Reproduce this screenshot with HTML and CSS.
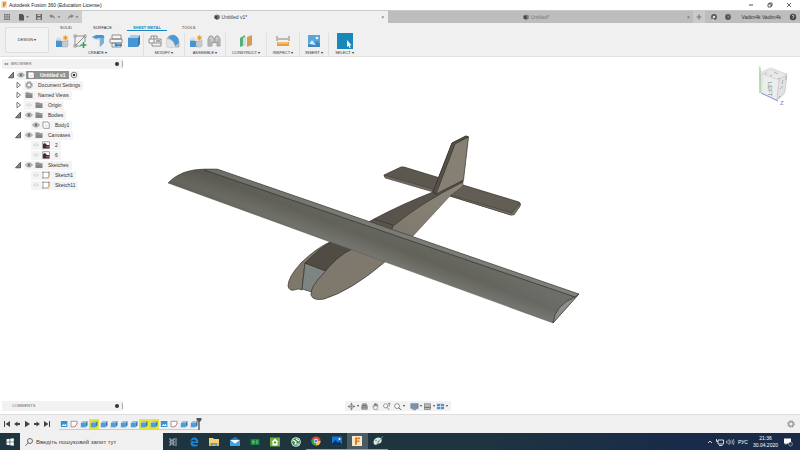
FILE: index.html
```html
<!DOCTYPE html>
<html lang="en">
<head>
<meta charset="utf-8">
<title>Autodesk Fusion 360</title>
<link rel="stylesheet" href="styles.css">
</head>
<body>
<svg class="defs" aria-hidden="true">
  <defs>
    <linearGradient id="wing" gradientUnits="userSpaceOnUse" x1="376" y1="226" x2="362" y2="262">
      <stop offset="0" stop-color="#66675f"/><stop offset=".35" stop-color="#62615a"/><stop offset=".75" stop-color="#75766f"/><stop offset="1" stop-color="#6a6b64"/>
    </linearGradient>
    <linearGradient id="shade" gradientUnits="userSpaceOnUse" x1="168" y1="180" x2="579" y2="310">
      <stop offset="0" stop-color="#3c3830" stop-opacity=".3"/><stop offset=".6" stop-color="#777" stop-opacity="0"/><stop offset="1" stop-color="#92979a" stop-opacity=".2"/>
    </linearGradient>
    <linearGradient id="side" x1="0" y1="1" x2="1" y2="0">
      <stop offset="0" stop-color="#7d786b"/><stop offset="1" stop-color="#8b867a"/>
    </linearGradient>
  </defs>
  <symbol id="eye" viewBox="0 0 10 10"><path d="M1.5 5Q5 1 8.5 5Q5 9 1.5 5Z" fill="#ddd" stroke="#888" stroke-width=".8"/><circle cx="5" cy="5" r="1.5" fill="#777"/></symbol>
  <symbol id="hidden" viewBox="0 0 10 10"><path d="M2 5Q5 2 8 5Q5 8 2 5Z" fill="#e8e8e8" stroke="#dcdcdc" stroke-width=".8"/></symbol>
  <symbol id="folder" viewBox="0 0 10 10"><path d="M1.5 2.5H5L5.7 3.2H8.5V8H1.5Z" fill="#858585"/><path d="M1.5 4.3H8.5" stroke="#b5b5b5" stroke-width=".5"/></symbol>
  <symbol id="open" viewBox="0 0 10 10"><path d="M7.5 2.2V7.8H2.5Z" fill="#888" stroke="#444" stroke-width=".8"/></symbol>
  <symbol id="closed" viewBox="0 0 10 10"><path d="M4 2.3L7.5 5L4 7.8Z" fill="#fff" stroke="#666" stroke-width=".9"/></symbol>
  <symbol id="gear" viewBox="0 0 10 10"><circle cx="5" cy="5" r="3.1" fill="none" stroke="#888" stroke-width="1.1" stroke-dasharray="1.6 .83"/><circle cx="5" cy="5" r="2.2" fill="none" stroke="#888" stroke-width="1"/></symbol>
  <symbol id="body" viewBox="0 0 10 10"><path d="M2 2H7L8.2 3V8.3H3L2 7.4Z" fill="#fff" stroke="#777" stroke-width=".7"/><path d="M4 5Q5.5 6.8 6.5 5" fill="none" stroke="#aaa" stroke-width=".6"/></symbol>
  <symbol id="photo" viewBox="0 0 10 10"><rect x="1.8" y="1.8" width="6.6" height="6.6" fill="#fff" stroke="#777" stroke-width=".7"/><path d="M2 4L4 3L6 5H8.2V8.2H2Z" fill="#39303c"/><path d="M5 6H8V7.5H5Z" fill="#a4506a"/></symbol>
  <symbol id="sketch" viewBox="0 0 10 10"><path d="M2 2.3H8V6L6 8H2Z" fill="#fff" stroke="#888" stroke-width=".7"/><path d="M8 3V7.7M5.6 8H8" stroke="#e2a24f" stroke-width=".8"/><g fill="#666"><rect x="1.4" y="1.7" width="1" height="1"/><rect x="1.4" y="7.4" width="1" height="1"/><rect x="7.4" y="1.7" width="1" height="1"/></g></symbol>
  <symbol id="tsketch" viewBox="0 0 10 10"><path d="M2 2.3H8V5L5.5 7.8H2Z" fill="#fff" stroke="#777" stroke-width=".7"/><path d="M8.3 4.5L5.5 8" stroke="#dc7868" stroke-width=".9"/></symbol>
  <symbol id="timg" viewBox="0 0 10 10"><rect x="1.8" y="2" width="6.6" height="6" fill="#3b91c7"/><path d="M2.5 7L4.5 5L5.5 6L6.7 4.8L7.8 7Z" fill="#e4f3fc"/></symbol>
  <symbol id="cube" viewBox="0 0 10 10"><path d="M1.8 4L3.8 2H8.5L6.6 4Z" fill="#96bfe2"/><path d="M1.8 4H6.6V8.3H1.8Z" fill="#509bd8"/><path d="M6.6 4L8.5 2V6.4L6.6 8.3Z" fill="#3876ae"/></symbol>
  <symbol id="newcomp" viewBox="0 0 14 14"><path d="M1 5H6V13H1Z" fill="#b9bec3"/><path d="M1 5L2 3.5H6.5V6H1Z" fill="#d8dcdf"/><path d="M1 7H7V13H1Z" fill="#4796d3"/><path d="M7 7H12L13 6V12L12 13H7Z" fill="#c8ccd0" stroke="#8d949b" stroke-width=".4"/><path d="M10.5 .5L11.2 2.4L13.4 2L12 3.8L13.4 5.5L11.2 5.2L10.5 7L9.6 5.2L7.6 5.5L8.9 3.8L7.6 2L9.6 2.4Z" fill="#efa02c"/></symbol>
  <symbol id="globe-nav" viewBox="0 0 10 10"><circle cx="5" cy="5" r="2.2" fill="none" stroke="#777" stroke-width=".8"/><path d="M5 1V9M1 5H9" stroke="#777" stroke-width=".7"/><path d="M5 .8L6 2H4ZM5 9.2L4 8H6ZM.8 5L2 4V6ZM9.2 5L8 6V4Z" fill="#666"/></symbol>
  <symbol id="tabcube" viewBox="0 0 10 10"><path d="M2 3L5 2L8.5 3V7L5.5 8.5L2 7Z" fill="#777"/><path d="M2 3L5.5 4V8.5L2 7Z" fill="#444"/></symbol>
</svg>

<header class="titlebar">
  <svg class="i8" viewBox="0 0 8 8"><rect x="1" y="0" width="6" height="7" rx="1" fill="#f7dfc0"/><path d="M3 1.2H6V2.5H4.3V3.3H5.6V4.4H4.3V6H3Z" fill="#e07b20"/></svg>
  <h1>Autodesk Fusion 360 (Education License)</h1>
  <div class="winbtns">
    <button aria-label="Minimize"><svg viewBox="0 0 10 10"><path d="M3 5H7" stroke="#222" stroke-width=".8"/></svg></button>
    <button aria-label="Restore"><svg viewBox="0 0 10 10"><path d="M3 4H6V7H3ZM4 4V3H7V6H6" fill="none" stroke="#222" stroke-width=".7"/></svg></button>
    <button aria-label="Close"><svg viewBox="0 0 10 10"><path d="M3 3L7 7M7 3L3 7" stroke="#222" stroke-width=".7"/></svg></button>
  </div>
</header>

<nav class="tabbar" aria-label="Documents">
  <div class="quick">
    <button aria-label="Data panel"><svg viewBox="0 0 10 10"><g fill="#666"><path d="M2 2h1.6v1.6H2zM4.2 2h1.6v1.6H4.2zM6.4 2H8v1.6H6.4zM2 4.2h1.6v1.6H2zM4.2 4.2h1.6v1.6H4.2zM6.4 4.2H8v1.6H6.4zM2 6.4h1.6V8H2zM4.2 6.4h1.6V8H4.2zM6.4 6.4H8V8H6.4z"/></g></svg></button>
    <button aria-label="File"><svg class="wide" viewBox="0 0 14 10"><path d="M3 2H6.5L8 3.5V8.5H3Z" fill="#555"/><path d="M10 4.3H13L11.5 6Z" fill="#666"/></svg></button>
    <button aria-label="Save"><svg viewBox="0 0 10 10"><path d="M2 2H8V8H2Z" fill="#666"/><path d="M3.5 2.5H6.5V4H3.5ZM3.3 5.5H6.7V7.6H3.3Z" fill="#ccc"/></svg></button>
    <button aria-label="Undo"><svg class="wide" viewBox="0 0 14 10"><path d="M1 4L4 2V3.3Q7 3.5 7 7.5Q6 5 4 5V6.2Z" fill="#888"/><path d="M9.5 4.3H12.5L11 6Z" fill="#777"/></svg></button>
    <button aria-label="Redo"><svg class="wide" viewBox="0 0 14 10"><path d="M8 4L5 2V3.3Q2 3.5 2 7.5Q3 5 5 5V6.2Z" fill="#888"/><path d="M9.5 4.3H12.5L11 6Z" fill="#777"/></svg></button>
  </div>
  <div class="doctab active"><a href="#"><svg class="i8"><use href="#tabcube"/></svg>Untitled v1*</a><button aria-label="Close tab">×</button></div>
  <div class="doctab"><a href="#"><svg class="i8"><use href="#tabcube"/></svg>Untitled*</a><button aria-label="Close tab">×</button></div>
  <div class="account">
    <button class="plus" aria-label="New tab"><svg viewBox="0 0 10 10"><path d="M5 2.5V7.5M2.5 5H7.5" stroke="#777" stroke-width="1.2"/></svg></button>
    <button aria-label="Extensions"><svg viewBox="0 0 10 10"><circle cx="5" cy="5" r="2.9" fill="#555"/><circle cx="5" cy="5" r="1.3" fill="#ddd"/><path d="M4 6L3 8.5H5.5Z" fill="#ddd"/></svg></button>
    <button aria-label="Job status"><svg viewBox="0 0 10 10"><circle cx="5" cy="5" r="2.9" fill="#555"/><path d="M5 3.4V5H6.4" stroke="#aaa" stroke-width=".7" fill="none"/></svg></button>
    <span>Vadim4k Vadim4k</span>
    <button aria-label="Help"><svg viewBox="0 0 10 10"><circle cx="5" cy="5" r="3.2" fill="#444"/><path d="M4 4.2Q4 3.2 5 3.2T6 4.2Q6 5 5 5.2V5.8M5 6.4V7" stroke="#eee" stroke-width=".7" fill="none"/></svg></button>
  </div>
</nav>

<section class="toolbar">
  <button class="workspace">DESIGN ▾</button>
  <div class="ribbon">
    <div class="ribtabs"><a href="#">SOLID</a><a href="#">SURFACE</a><a href="#" class="on">SHEET METAL</a><a href="#">TOOLS</a></div>
    <div class="groups">
      <div class="group create">
        <div class="icons">
          <svg><use href="#newcomp"/></svg>
          <svg viewBox="0 0 14 14"><path d="M2 2H12V8M2 2V12H8M2 12L12 2" fill="none" stroke="#777" stroke-width=".8"/><g fill="#fff" stroke="#666" stroke-width=".6"><rect x="1" y="1" width="2" height="2"/><rect x="11" y="1" width="2" height="2"/><rect x="1" y="11" width="2" height="2"/></g><path d="M10.5 8V14M7.5 11H13.5" stroke="#33a05a" stroke-width="1.6"/></svg>
          <svg viewBox="0 0 14 14"><path d="M1 3L5 1H12Q14 2 13 5L9 4Q8 4 5 5Z" fill="#4796d3"/><path d="M9 4L13 4V9L9 13Z" fill="#73b3e2"/><path d="M1 3L5 5H9V13" fill="none" stroke="#aaa" stroke-width=".6"/></svg>
          <svg viewBox="0 0 14 14"><path d="M3 1H12V5H3ZM3 9H12V13H3ZM1 5H13V9H1Z" fill="#f6f6f6" stroke="#777" stroke-width=".8"/><path d="M5 11L8 9V10.3H13V12H8V13.3Z" fill="#2e83c6"/></svg>
          <svg viewBox="0 0 14 14"><path d="M1 4L4 1H13L11 4Z" fill="#a7cdea"/><path d="M1 4H11V13H1Z" fill="#4796d3"/><path d="M11 4L13 1V10L11 13Z" fill="#347ab4"/></svg>
        </div>
        <button>CREATE ▾</button>
      </div>
      <div class="group modify">
        <div class="icons">
          <svg viewBox="0 0 14 14"><path d="M3 2H9V5H13V12H4V9H1V5H3ZM3 5H9M6 2V9M4 9H13" fill="#f6f6f6" stroke="#777" stroke-width=".8"/><path d="M8 6H12V8H8Z" fill="#aaa"/></svg>
          <svg viewBox="0 0 14 14"><path d="M1 13V5Q2 1 7 1Q13 2 13 9V13Z" fill="#c3c8cc" stroke="#888" stroke-width=".5"/><path d="M2 4Q4 1 8 1Q13 3 13 9L9 12Q8 6 2 4Z" fill="#4b9ad8"/><path d="M1 5Q8 6 9 13H1Z" fill="#e2e4e6"/></svg>
        </div>
        <button>MODIFY ▾</button>
      </div>
      <div class="group assemble">
        <div class="icons">
          <svg><use href="#newcomp"/></svg>
          <svg viewBox="0 0 14 14"><path d="M1 12V5Q2 1 5 2L7 4V9L5 8V12ZM13 12V5Q12 1 9 2L8 4V9L10 8V12Z" fill="#ccc" stroke="#888" stroke-width=".8"/><path d="M3 5V11M11 5V11" stroke="#999" stroke-width="1"/></svg>
        </div>
        <button>ASSEMBLE ▾</button>
      </div>
      <div class="group construct">
        <div class="icons"><svg viewBox="0 0 14 14"><path d="M1 4L6 1V11L1 13Z" fill="#58ad7c"/><path d="M4 4L7 2V11L4 13Z" fill="#d5ddd8"/><path d="M8 3L13 1V11L8 13Z" fill="#d99a54"/></svg></div>
        <button>CONSTRUCT ▾</button>
      </div>
      <div class="group inspect">
        <div class="icons"><svg viewBox="0 0 14 14"><path d="M1 2V7M13 2V7M2 5H12" stroke="#666" stroke-width=".8"/><path d="M1 8H13V12H1Z" fill="#e6a13c"/><path d="M3 8V10M5 8V10M7 8V10M9 8V10M11 8V10" stroke="#fff" stroke-width=".6"/></svg></div>
        <button>INSPECT ▾</button>
      </div>
      <div class="group insert">
        <div class="icons"><svg viewBox="0 0 14 14"><rect x="1" y="1" width="12" height="12" fill="#5aa6dc"/><path d="M1 11L5 6L8 9L10 7L13 10V13H1Z" fill="#3d86bf"/><path d="M2 10L5 6L9 11Z" fill="#dcecf8"/><circle cx="10" cy="4" r="1.3" fill="#e9f4fb"/></svg></div>
        <button>INSERT ▾</button>
      </div>
      <div class="group select">
        <div class="icons"><svg class="sel" viewBox="0 0 16 16"><rect width="16" height="16" fill="#1689b8"/><path d="M10 7V14L11.5 12.7L12.5 15L13.6 14.5L12.7 12.3H14.5Z" fill="#fff"/></svg></div>
        <button>SELECT ▾</button>
      </div>
    </div>
  </div>
</section>

<main class="viewport">
  <svg class="model" viewBox="0 57 800 354" role="img" aria-label="Model aeroplane">
    <g stroke="#33312c" stroke-width=".7" stroke-linejoin="round">
      <path d="M384 175L401 167L404 167L440 178L433 191L385 177Z" fill="#5c584f"/>
      <path d="M384 175L433 189V192L385 178Z" fill="#6d695f" stroke-width=".4"/>
      <path d="M450 195L463 185L519 202Q521 203 520 206L514 214L511 215L450 196Z" fill="#625e55"/>
      <path d="M450 195L512 213L520 203V206L514 215H511L450 196Z" fill="#7a766a" stroke-width=".5"/>
      <path d="M463 181V186L450 196L413 236L390 231L393 225Q422 203 463 181Z" fill="url(#side)" stroke-width=".4"/>
      <path d="M365 224L374 219Q400 205 433 192L436 194L463 180V182Q422 202 393 226L391 231Z" fill="#58544c"/>
      <path d="M374 219L393 225" fill="none"/>
      <path d="M452 143L466 136L468.500 137L463.500 180L436 194L433 192Z" fill="#858073"/>
      <path d="M452 143L466 136L468.500 137L455 144L436 194L433 192Z" fill="#555148"/>
      <path d="M332 241Q316 248 301 263Q288 277 288 286Q289 291 294 290Q299 288 302 290L305 263L352 249Z" fill="#7e786b"/>
      <path d="M305 263L326 271L312 292L302 289Z" fill="#7e8481"/>
      <path d="M332 241L352 249Q337 259 326 271L305 263Q317 250 332 241Z" fill="#504c44"/>
      <path d="M352 249Q337 256 323 274Q310 287 311 295Q313 301 324 299Q351 291 386 261Z" fill="#7e796c"/>
      <path d="M168 183Q181 169 205 169L217 169L579 294L553 323Z" fill="url(#wing)" stroke="none"/>
      <path d="M204 170L217 169L579 294L575 297Z" fill="#7a7c76" stroke="none"/>
      <path d="M168 183Q181 169 205 169L217 169L579 294L553 323Z" fill="url(#shade)" stroke="none"/>
      <path d="M168 183Q181 169 205 169L217 169L579 294" fill="none" stroke-width=".5"/>
      <path d="M168 183L553 323" stroke-width=".4" stroke="#55544e"/>
      <path d="M204 170L575 297" fill="none"/>
      <path d="M553 323Q555 305 575 297L579 294Z" fill="#8c908b"/>
    </g>
  </svg>

  <aside class="browser">
    <div class="panelhead"><span>◂◂</span><h2>BROWSER</h2><i class="dot"></i><i class="grip"></i></div>
    <ul class="tree">
      <li class="l0"><svg><use href="#open"/></svg><div class="node"><svg><use href="#eye"/></svg><b><svg><use href="#body"/></svg><span>Untitled v1</span></b><svg viewBox="0 0 10 10"><circle cx="5" cy="5" r="2.800" fill="#fff" stroke="#555" stroke-width=".7"/><circle cx="5" cy="5" r="1.300" fill="#333"/></svg></div></li>
      <li class="l1"><svg><use href="#closed"/></svg><div class="node"><svg><use href="#gear"/></svg><span>Document Settings</span></div></li>
      <li class="l1"><svg><use href="#closed"/></svg><div class="node"><svg><use href="#folder"/></svg><span>Named Views</span></div></li>
      <li class="l1"><svg><use href="#closed"/></svg><div class="node"><svg><use href="#hidden"/></svg><svg><use href="#folder"/></svg><span>Origin</span></div></li>
      <li class="l1"><svg><use href="#open"/></svg><div class="node"><svg><use href="#eye"/></svg><svg><use href="#folder"/></svg><span>Bodies</span></div></li>
      <li class="l2"><div class="node"><svg><use href="#eye"/></svg><svg><use href="#body"/></svg><span>Body1</span></div></li>
      <li class="l1"><svg><use href="#open"/></svg><div class="node"><svg><use href="#eye"/></svg><svg><use href="#folder"/></svg><span>Canvases</span></div></li>
      <li class="l2"><div class="node"><svg><use href="#hidden"/></svg><svg><use href="#photo"/></svg><span>2</span></div></li>
      <li class="l2"><div class="node"><svg><use href="#hidden"/></svg><svg><use href="#photo"/></svg><span>6</span></div></li>
      <li class="l1"><svg><use href="#open"/></svg><div class="node"><svg><use href="#eye"/></svg><svg><use href="#folder"/></svg><span>Sketches</span></div></li>
      <li class="l2"><div class="node"><svg><use href="#hidden"/></svg><svg><use href="#sketch"/></svg><span>Sketch1</span></div></li>
      <li class="l2"><div class="node"><svg><use href="#hidden"/></svg><svg><use href="#sketch"/></svg><span>Sketch11</span></div></li>
    </ul>
  </aside>

  <svg class="viewcube" viewBox="0 0 34 44" role="img" aria-label="View cube">
    <path d="M3 8L15 3L31 10L29 30L21 37L4 28Z" fill="#d4d4d4" opacity=".5"/>
    <path d="M6 10L14 5L31 10L23 16Z" fill="#e8e8e8" stroke="#ccc" stroke-width=".5"/>
    <path d="M6 10L23 16L21 36L6 29Z" fill="#ededed" stroke="#ccc" stroke-width=".5"/>
    <path d="M23 16L31 10L29 28L21 36Z" fill="#e2e2e2" stroke="#bbb" stroke-width=".5"/>
    <path d="M9 10L11 9M14 12L16 11M18 8L22 10M22 15L24 14M26 20L27 16M24 25L27 22M23 34L24 32M30 12V16" stroke="#999" stroke-width=".7"/>
    <path d="M4 4V29" stroke="#8ed08e" stroke-width="1.200"/><path d="M5 29L22 37" stroke="#8a92dc" stroke-width="1"/>
    <text x="12" y="18" transform="rotate(90 12 18)">LEFT</text><text class="y" x="2" y="5">Y</text><text class="z" x="24" y="41">Z</text>
  </svg>

  <aside class="comments"><div class="panelhead"><h2>COMMENTS</h2><i class="dot"></i><i class="grip"></i></div></aside>

  <div class="navbar">
    <button class="dd" aria-label="Orbit"><svg><use href="#globe-nav"/></svg></button>
    <button aria-label="Look at"><svg viewBox="0 0 10 10"><path d="M2 4H8V8H2ZM3 2H7V4H3Z" fill="#aaa" stroke="#666" stroke-width=".7"/><path d="M2 6H8" stroke="#666" stroke-width=".6"/></svg></button>
    <button aria-label="Pan"><svg viewBox="0 0 10 10"><path d="M3.500 8.500L2 5L3.300 5.500V2.500H4.300V4.500V1.700H5.300V4.500V2H6.300V4.700L6.500 3H7.400V6.500L6.700 8.500Z" fill="#eee" stroke="#666" stroke-width=".6"/></svg></button>
    <button aria-label="Zoom"><svg viewBox="0 0 10 10"><circle cx="4" cy="4.300" r="2.300" fill="#fff" stroke="#666" stroke-width=".7"/><path d="M5.700 6L8 8.500M8 1V5M7 2L8 1L9 2" stroke="#555" stroke-width=".8" fill="none"/></svg></button>
    <button class="dd" aria-label="Fit"><svg viewBox="0 0 10 10"><circle cx="4.500" cy="4.500" r="2.700" fill="#fff" stroke="#666" stroke-width=".8"/><path d="M6.500 6.500L9 8.800" stroke="#555" stroke-width="1"/></svg></button>
    <button class="dd gap" aria-label="Display settings"><svg viewBox="0 0 10 10"><rect x="1" y="2" width="8" height="5" fill="#7196b9" stroke="#777" stroke-width=".8"/><path d="M3 8.500H7" stroke="#777"/></svg></button>
    <button class="dd" aria-label="Grid and snaps"><svg viewBox="0 0 10 10"><rect x="1.500" y="2" width="7" height="6.500" fill="#bbb" stroke="#777" stroke-width=".7"/><path d="M1.500 6H8.500" stroke="#666"/></svg></button>
    <button class="dd" aria-label="Viewports"><svg viewBox="0 0 10 10"><rect x="1" y="2" width="8" height="6" fill="#5c8fc0"/><path d="M5 2V8M1 5H9" stroke="#e5edf5" stroke-width=".8"/></svg></button>
  </div>
</main>

<section class="timeline">
  <div class="play">
    <button aria-label="First"><svg viewBox="0 0 10 10"><path d="M2.500 2V8" stroke="#444"/><path d="M8 2V8L3.500 5Z" fill="#444"/></svg></button>
    <button aria-label="Back"><svg viewBox="0 0 10 10"><path d="M5.500 2.500V7.500L2 5ZM5.500 4H8V6H5.500Z" fill="#444"/></svg></button>
    <button aria-label="Play"><svg viewBox="0 0 10 10"><path d="M3 1.700V8.300L8 5Z" fill="#444"/></svg></button>
    <button aria-label="Forward"><svg viewBox="0 0 10 10"><path d="M4.500 2.500V7.500L8 5ZM2 4H4.500V6H2Z" fill="#444"/></svg></button>
    <button aria-label="Last"><svg viewBox="0 0 10 10"><path d="M7.500 2V8" stroke="#444"/><path d="M2 2V8L6.500 5Z" fill="#444"/></svg></button>
  </div>
  <div class="features">
    <svg><use href="#timg"/></svg><svg><use href="#tsketch"/></svg><svg><use href="#cube"/></svg><svg class="warn"><use href="#cube"/></svg><svg><use href="#cube"/></svg><svg><use href="#cube"/></svg><svg><use href="#cube"/></svg><svg><use href="#cube"/></svg><svg class="warn"><use href="#cube"/></svg><svg class="warn"><use href="#cube"/></svg><svg><use href="#timg"/></svg><svg><use href="#tsketch"/></svg><svg><use href="#cube"/></svg><svg><use href="#cube"/></svg>
  </div>
  <svg class="marker" viewBox="0 0 6 14"><path d="M.5 1H5.500V3L3.700 5V13H2.300V5L.5 3Z" fill="#555"/></svg>
  <button class="settings" aria-label="Timeline settings"><svg><use href="#gear"/></svg></button>
</section>

<footer class="taskbar">
  <button class="start" aria-label="Start"><svg viewBox="0 0 10 10"><path d="M1.500 2.300L4.600 1.800V4.700H1.500ZM5.200 1.700L8.800 1.200V4.700H5.200ZM1.500 5.300H4.600V8.200L1.500 7.700ZM5.200 5.300H8.800V8.800L5.200 8.300Z" fill="#fff"/></svg></button>
  <label class="search"><svg viewBox="0 0 10 10"><circle cx="6" cy="4" r="2.500" fill="none" stroke="#333" stroke-width=".7"/><path d="M4.200 5.800L1.500 8.700" stroke="#333" stroke-width=".7"/></svg><input type="text" aria-label="Пошук" placeholder="Введіть пошуковий запит тут"></label>
  <div class="apps">
    <button aria-label="Task view"><svg viewBox="0 0 12 12"><path d="M3 2V4H7V2M3 10V8H7V10M3 5H7V7H3ZM9 2V10" fill="none" stroke="#ccd" stroke-width=".8"/></svg></button>
    <button aria-label="Edge"><svg viewBox="0 0 12 12"><path d="M2 6Q3 1.500 6.500 1.500Q10.500 2 10.300 7H4.500Q5 9.300 9.500 8.300V10Q3 12 2.500 7.500Q3 5 5 4.300Q4.500 5 4.600 5.500H8Q8 3.500 6 3.500Q3.500 3.500 2 6Z" fill="#1a85d8"/></svg></button>
    <button aria-label="Explorer"><svg viewBox="0 0 12 12"><path d="M1 2H5L6 3H11V10H1Z" fill="#f3d271"/><path d="M1 7H11V10H1Z" fill="#e5b945"/><path d="M3 7H9V10H7.500V8.500H4.500V10H3Z" fill="#4b9fd6"/></svg></button>
    <button aria-label="Mail"><svg viewBox="0 0 12 12"><path d="M1 4L6 1L11 4V10H1Z" fill="#1c7fd0"/><path d="M1 4H11L6 8Z" fill="#fff"/><path d="M1 4L6 8L11 4V10H1Z" fill="#3aa6ea"/></svg></button>
    <button aria-label="Monitor"><svg viewBox="0 0 12 12"><rect x="1.500" y="3" width="9" height="6" fill="#13843d"/><path d="M3 5H5V7H3M7 5H9M7 7H9" stroke="#a8e8a8" stroke-width=".7" fill="none"/></svg></button>
    <button aria-label="Home"><svg viewBox="0 0 12 12"><rect x="1" y="1.500" width="10" height="9" fill="#6eb13e"/><path d="M6 2.500L9.500 6H8.500V9.500H3.500V6H2.500Z" fill="#fff"/><circle cx="6" cy="6.500" r="1.200" fill="#5a9e35"/></svg></button>
    <button aria-label="Utility"><svg viewBox="0 0 12 12"><circle cx="6" cy="6" r="4.800" fill="#dceadd"/><circle cx="6" cy="6" r="3.800" fill="#2e8b4c"/><path d="M3 4L6 6L5 8L9 8M6 3L9 5" stroke="#fff" stroke-width="1.200" fill="none"/></svg></button>
    <button class="run" aria-label="Chrome"><svg viewBox="0 0 12 12"><circle cx="6" cy="6" r="4.600" fill="#e04a3b"/><path d="M6 6L2 3.700A4.600 4.600 0 0 0 6 10.600Z" fill="#31a353"/><path d="M6 6H10.600A4.600 4.600 0 0 1 6 10.600Z" fill="#f2c437"/><circle cx="6" cy="6" r="2.200" fill="#fff"/><circle cx="6" cy="6" r="1.600" fill="#4385ec"/></svg></button>
    <button class="run" aria-label="Photos"><svg viewBox="0 0 12 12"><rect x="1" y="1.500" width="10" height="9" fill="#1976cf"/><path d="M1 9L4.500 5L7 8L8.500 6.500L11 9.500V10.500H1Z" fill="#0b2d5d"/><circle cx="8.500" cy="4" r="1" fill="#fff"/></svg></button>
    <button class="run on" aria-label="Fusion 360"><svg viewBox="0 0 12 12"><rect x="1" y="1" width="10" height="10" fill="#f8e6cd"/><path d="M4 2.500H9V4.300H6V5.500H8.500V7H6V9.800H4Z" fill="#e57d1b"/></svg></button>
    <button class="run" aria-label="Paint"><svg viewBox="0 0 12 12"><path d="M1.500 7Q2 2.500 7 2.500Q10.500 3 9.500 6.500Q9 9 6 8.500Q5 9.500 4 10Q1.500 10 1.500 7Z" fill="#d9e3e4"/><path d="M4 10L10.500 1.500" stroke="#8d9ba0" stroke-width=".9"/><circle cx="4" cy="5.500" r=".8" fill="#4c9c68"/><circle cx="6.500" cy="6.500" r=".8" fill="#777"/></svg></button>
  </div>
  <div class="tray">
    <button aria-label="Hidden icons"><svg viewBox="0 0 10 10"><path d="M3 6L5 4L7 6" fill="none" stroke="#fff" stroke-width=".8"/></svg></button>
    <button aria-label="Network"><svg viewBox="0 0 10 10"><path d="M3 3H8.500V7H3ZM1.500 2V4.500H3M4 8.500H7.500" fill="none" stroke="#fff" stroke-width=".8"/></svg></button>
    <button aria-label="Volume"><svg viewBox="0 0 10 10"><path d="M1.500 4H2.500L4.300 2.500V7.500L2.500 6H1.500ZM5.500 3.500Q6.300 5 5.500 6.500M7 2.800Q8.200 5 7 7.200M8.300 2Q10 5 8.300 8" fill="none" stroke="#ddd" stroke-width=".6"/></svg></button>
    <span>РУС</span>
    <time>21:36<br>30.04.2020</time>
    <button class="notes" aria-label="Notifications"><svg viewBox="0 0 10 10"><path d="M1 1.500H8V6.500H4L2.500 8V6.500H1Z" fill="#fff"/><circle cx="7.500" cy="7" r="2" fill="#243752" stroke="#ccc" stroke-width=".5"/></svg></button>
  </div>
</footer>
</body>
</html>
```
FILE: styles.css
```css
*, *::after { box-sizing: border-box; }
body {
  margin: 0;
  min-height: 100vh;
  display: flex;
  flex-direction: column;
  background: #fff;
  color: #333;
  font: 5px/8px "Liberation Sans", Arial, sans-serif;
  white-space: nowrap;
}
button {
  display: flex;
  align-items: center;
  justify-content: center;
  padding: 0;
  border: 0;
  background: none;
  color: inherit;
  font: inherit;
}
a { color: inherit; text-decoration: none; }
h1, h2, ul { margin: 0; padding: 0; font: inherit; list-style: none; }
svg { display: block; flex: none; width: 10px; height: 10px; }
.defs { position: absolute; width: 0; height: 0; }
.i8 { width: 8px; height: 8px; }

/* Window title */
.titlebar { display: flex; align-items: center; height: 10px; gap: 1px; color: #222; }
.titlebar h1 { flex: 1; }
.winbtns { display: flex; gap: 9px; padding-right: 6px; }

/* Document tabs */
.tabbar {
  display: flex;
  height: 13px;
  background: #bdbdbd;
  border-top: 1px solid #c9c9c9;
}
.quick { display: flex; align-items: center; gap: 4px; width: 82px; padding-left: 2px; background: #cdcdcd; }
.quick .wide { width: 14px; }
.doctab { flex: 1; display: flex; align-items: center; color: #777; }
.doctab.active { background: #f0f0f0; color: #444; }
.doctab a { flex: 1; display: flex; align-items: center; justify-content: center; gap: 1px; }
.doctab button { width: 10px; color: #666; }
.account { display: flex; align-items: center; gap: 4px; padding-right: 2px; color: #333; }
.account .plus { width: 12px; height: 12px; background: #cacaca; }
.account span { padding: 0 3px 0 4px; }

/* Ribbon */
.toolbar {
  display: flex;
  height: 34px;
  background: #f0f0f0;
  border-bottom: 1px solid #e2e2e2;
  font-size: 4px;
  line-height: 6px;
}
.workspace {
  width: 44px;
  height: 26px;
  margin: 4px 3px 0 5px;
  border: 1px solid #dcdcdc;
  border-radius: 2px;
  background: #f3f3f3;
}
.ribtabs { display: flex; gap: 9px; padding-left: 2px; }
.ribtabs a { height: 8px; padding: 2px 6px 0; }
.ribtabs .on { border-bottom: 1px solid #1a86c4; color: #1a86c4; font-weight: bold; }
.groups { display: flex; padding-top: 2px; }
.group { border-right: 1px solid #e0e0e0; }
.group:last-child { border: 0; }
.group > button { width: 100%; height: 8px; }
.icons { display: flex; align-items: center; justify-content: center; gap: 4px; height: 16px; }
.icons svg { width: 14px; height: 14px; }
.icons .sel { width: 16px; height: 16px; }
.create { width: 92px; }
.modify, .assemble, .construct { width: 41px; }
.inspect { width: 33px; }
.insert { width: 29px; }
.select { width: 31px; }

/* Canvas: the model fills it and the panels lie over the corners */
.viewport {
  flex: 1;
  display: grid;
  grid-template: 1fr auto / 1fr auto 1fr;
  padding-bottom: 3px;
}
.model { grid-area: 1 / 1 / 3 / 4; width: 100%; height: auto; }
.browser { grid-area: 1 / 1; width: 123px; padding: 2px 0 0 2px; z-index: 1; }
.viewcube { grid-area: 1 / 3; justify-self: end; width: 34px; height: 44px; margin: 7px 10px; font-size: 6px; fill: #777; }
.viewcube .y { fill: #8ed08e; font-size: 4px; }
.viewcube .z { fill: #7a82d0; }
.comments { grid-area: 2 / 1; width: 123px; padding-left: 2px; }
.panelhead {
  display: flex;
  align-items: center;
  gap: 3px;
  height: 10px;
  padding-left: 2px;
  background: #f2f2f2;
  color: #666;
  font-size: 4px;
}
.comments .panelhead { padding-left: 10px; }
.panelhead h2 { flex: 1; }
.dot { width: 4px; height: 4px; border-radius: 50%; background: #333; }
.grip { width: 1px; height: 6px; background: #aaa; }
.tree { padding-top: 1px; }
.tree li { display: flex; height: 10px; align-items: center; }
.l0 { padding-left: 4px; }
.l1 { padding-left: 11px; }
.l2 { padding-left: 29px; }
.node { display: flex; align-items: center; height: 9px; background: #f4f4f4; }
.l1 .node { margin-left: 1px; }
.node span { padding: 0 3px 0 4px; }
.node b { display: flex; align-items: center; height: 8px; background: #929292; color: #fff; }
.navbar {
  grid-area: 2 / 2;
  display: flex;
  align-items: center;
  height: 10px;
  margin-right: 4px;
  padding: 0 3px 0 1px;
  background: #f2f2f2;
}
.navbar svg { width: 9px; height: 9px; margin: 0 1px; }
.navbar .dd::after { content: ""; width: 2px; border: 1px solid transparent; border-width: 2px 1px 0; border-top-color: #444; }
.navbar .gap { margin-left: 4px; }

/* Timeline */
.timeline {
  display: flex;
  align-items: center;
  height: 19px;
  padding: 0 4px 0 2px;
  background: #f0f0f0;
  border-top: 1px solid #dedede;
}
.play { display: flex; }
.features { display: flex; margin-left: 7px; border-bottom: 1px solid #ccc; }
.warn { background: #e3e63c; }
.marker { width: 6px; height: 14px; margin-left: -3px; }
.settings { margin-left: auto; }

/* Taskbar */
.taskbar {
  display: flex;
  height: 17px;
  background: linear-gradient(90deg, #1e353f, #1e3440 60%, #192b49 85%);
  color: #fff;
}
.start { width: 20px; }
.search {
  display: flex;
  align-items: center;
  gap: 2px;
  width: 143px;
  padding-left: 4px;
  background: #f0f0f0;
}
.search input { flex: 1; min-width: 0; padding: 0; border: 0; background: none; font: 6px/10px "Liberation Sans", Arial, sans-serif; }
.search input::placeholder { color: #444; opacity: 1; }
.apps { display: grid; grid-template-columns: repeat(11, 1fr); width: 225px; }
.apps svg { width: 12px; height: 12px; }
.run { border-bottom: 1px solid #6ba9d6; }
.apps .on { background: #4a5b63; }
.tray { display: flex; align-items: center; margin-left: auto; padding-right: 7px; }
.tray span { padding: 0 5px 0 3px; }
.tray time { line-height: 7px; text-align: center; }
.notes { margin-left: 5px; }
```
